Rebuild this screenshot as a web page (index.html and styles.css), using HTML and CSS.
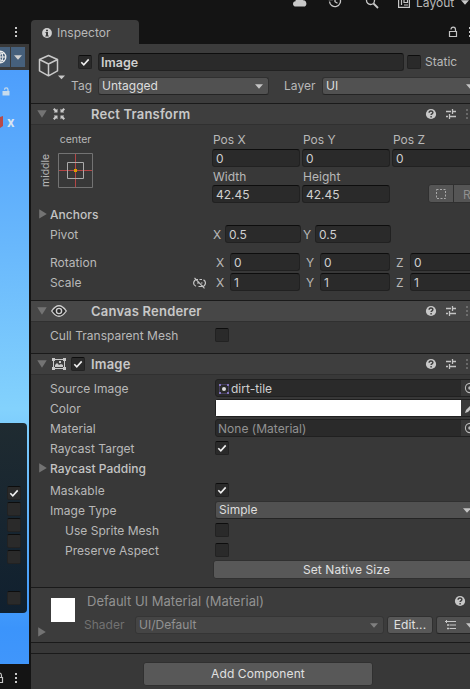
FILE: index.html
```
<!DOCTYPE html>
<html lang="en">
<head>
<meta charset="utf-8">
<title>Inspector</title>
<link rel="stylesheet" href="styles.css">
</head>
<body>
<svg class="defs" width="0" height="0">
  <symbol id="check" viewBox="0 0 14 14"><path d="M3.3 7.2l2.5 2.6 4.9-5.4" fill="none" stroke="#f0f0f0" stroke-width="1.6"/></symbol>
  <symbol id="help" viewBox="0 0 12 12"><circle cx="6" cy="6" r="5.1" fill="#c8c8c8"/><path d="M4.1 4.8c0-2.4 3.8-2.3 3.8-.2 0 1.2-1.8 1.2-1.8 2.4M6.1 8v1.4" fill="none" stroke="#3c3c3c" stroke-width="1.4"/></symbol>
  <symbol id="preset" viewBox="0 0 12 12"><path d="M1 3.5h5M8 3.5h3M7.5 1v5M1 8.5h2M5 8.5h6M4.5 6v5" fill="none" stroke="#c4c4c4" stroke-width="1.3"/></symbol>
  <symbol id="dots" viewBox="0 0 4 12"><path d="M1 1h2v2H1zM1 5h2v2H1zM1 9h2v2H1z" fill="#c8c8c8"/></symbol>
  <symbol id="lock" viewBox="0 0 10 12"><path d="M1.5 5.5h7v5h-7zM3 3.5c0-3.2 4.5-3.2 4.5 0v2" fill="none" stroke="#c4c4c4" stroke-width="1.2"/></symbol>
  <symbol id="down" viewBox="0 0 8 5"><path d="M0 .3h8L4 4.8z" fill="currentColor"/></symbol>
  <symbol id="fold" viewBox="0 0 10 8"><path d="M.3.2h9.4L5 7.8z" fill="#737373"/></symbol>
  <symbol id="right" viewBox="0 0 8 10"><path d="M.2.2v9.4L7.8 5z" fill="#737373"/></symbol>
  <symbol id="picker" viewBox="0 0 12 12"><circle cx="6" cy="6" r="4.6" fill="none" stroke="#bbb" stroke-width="1.1"/><circle cx="6" cy="6" r="1.8" fill="#bbb"/></symbol>
</svg>
<div class="app">
  <header class="topbar">
    <svg class="cloud" width="16" height="12" viewBox="0 0 16 12"><path d="M4 11.6C.1 11.6.1 6.5 3.5 6.300 3.700 1 10.500 1 11 5.300c4.200-.3 4.600 6.300.8 6.300z" fill="#c8c8c8"/></svg>
    <svg class="history" width="14" height="14" viewBox="0 0 14 14"><path d="M1.500 7.500A5.500 5.500 0 1 0 3.300 3M1.200 2v3.500h3.600M7 4v3.700l2.500 1.500" fill="none" stroke="#c8c8c8" stroke-width="1.300"/></svg>
    <svg class="search" width="14" height="14" viewBox="0 0 14 14"><circle cx="5.500" cy="5.500" r="4" fill="none" stroke="#c8c8c8" stroke-width="1.300"/><path d="M8.500 8.500l4.500 4.500" stroke="#c8c8c8" stroke-width="1.800"/></svg>
    <svg class="layout-icon" width="12" height="12" viewBox="0 0 12 12"><path d="M.6.6h10.800v10.800H.6zM3.500 3v6M6 3v3.500h3.500V3M6 9h4" fill="none" stroke="#c8c8c8" stroke-width="1.200"/></svg>
    <span class="layout-text">Layout</span>
    <svg class="layout-arrow" width="8" height="5"><use href="#down"/></svg>
  </header>
  <div class="main">
    <aside class="scene-panel">
      <div class="scene-tabs"><svg width="4" height="12"><use href="#dots"/></svg></div>
      <div class="scene-tools">
        <div class="globe"><svg width="13" height="14" viewBox="0 0 13 14"><circle cx="6" cy="7" r="5.800" fill="none" stroke="#eee" stroke-width="1.300"/><path d="M0 7h12M6 1v12M2 3q4 2.500 8 0M2 11q4-2.500 8 0M6 1q-6 6 0 12M6 1q6 6 0 12" fill="none" stroke="#eee"/></svg></div>
        <div class="tool-drop"><svg width="8" height="5"><use href="#down"/></svg></div>
      </div>
      <div class="scene">
        <div class="scene-lock"><svg width="8" height="9" viewBox="0 0 8 9"><path d="M.5 4h7v4.500h-7z" fill="#c7dbed"/><path d="M2.500 2.700C2.500.3 6 .3 6 2.700V4" fill="none" stroke="#c7dbed" stroke-width="1.200"/></svg></div>
        <div class="axis"><svg width="3" height="14" viewBox="0 0 3 14"><path d="M0 2l3-1v10l-3 2z" fill="#b84a48"/></svg><b>x</b></div>
        <div class="overlay">
          <span class="box"><svg width="14" height="14"><use href="#check"/></svg></span>
          <span class="box"></span><span class="box"></span><span class="box"></span><span class="box"></span>
          <span class="box last"></span>
        </div>
      </div>
      <div class="scene-foot"><svg width="10" height="12"><use href="#lock"/></svg><svg width="4" height="12"><use href="#dots"/></svg></div>
    </aside>

    <section class="inspector">
      <div class="tabs">
        <div class="tab"><svg width="10" height="10" viewBox="0 0 10 10"><circle cx="5" cy="5" r="4.900" fill="#d0d0d0"/><path d="M4 1.700h2v1.500H4zM3.500 4.100H6v3.300h.8v1H3.300v-1H4V5h-.5z" fill="#3c3c3c"/></svg><span>Inspector</span></div>
        <svg class="tab-lock" width="10" height="12"><use href="#lock"/></svg>
        <svg class="tab-dots" width="4" height="12"><use href="#dots"/></svg>
      </div>

      <div class="object">
        <svg class="cube" width="28" height="28" viewBox="0 0 28 28"><path d="M10.500 1.500l9 4v11.300l-9 5-9-5V5.500zM1.500 5.500l9 4.500 9-4.500M10.500 10v11.500" fill="none" stroke="#c8c8c8" stroke-width="1.500" stroke-linejoin="round"/><path d="M20 21.500h7l-3.500 3.700z" fill="#c8c8c8"/></svg>
        <div class="object-rows">
          <div class="object-row">
            <span class="box active"><svg width="14" height="14"><use href="#check"/></svg></span>
            <div class="field name">Image</div>
            <span class="box"></span><span class="static">Static</span>
          </div>
          <div class="object-row">
            <span class="tag">Tag</span>
            <div class="drop tag-drop">Untagged<svg width="8" height="5"><use href="#down"/></svg></div>
            <span class="layer">Layer</span>
            <div class="drop layer-drop">UI<svg width="8" height="5"><use href="#down"/></svg></div>
          </div>
        </div>
      </div>

      <div class="component-head">
        <svg class="fold" width="10" height="8"><use href="#fold"/></svg>
        <svg class="kind rect" width="12" height="12" viewBox="0 0 12 12"><path d="M0 1.500L1.500 0l1.700 1.700L4.500.8V4.500H.8L1.700 3.200zM12 1.500L10.500 0 8.800 1.700 7.500.8V4.500h3.700L10.300 3.200zM0 10.500L1.500 12l1.700-1.700 1.300.9V7.500H.8l.9 1.300zM12 10.500L10.500 12l-1.700-1.700-1.300.9V7.500h3.700l-.9 1.300z" fill="#c8c8c8"/></svg>
        <h2>Rect Transform</h2>
        <div class="tools"><svg width="12" height="12"><use href="#help"/></svg><svg width="12" height="12"><use href="#preset"/></svg><svg width="4" height="12" opacity=".3"><use href="#dots"/></svg></div>
      </div>
      <div class="rect-body">
        <div class="rect-top">
          <div class="anchor">
            <span class="anchor-x">center</span>
            <span class="anchor-y">middle</span>
            <svg class="anchor-box" width="35" height="35" viewBox="0 0 35 35"><path d="M.5.500h34v34H.5z" fill="none" stroke="#737373"/><path d="M17.500 1v33M1 17.500h33" stroke="#b44646"/><path d="M9.500 9.500h16v16h-16z" fill="none" stroke="#aaa"/><path d="M16 16h3v3h-3z" fill="#dc9c00"/></svg>
          </div>
          <div class="pos-grid">
            <span>Pos X</span><span>Pos Y</span><span>Pos Z</span>
            <div class="field">0</div><div class="field">0</div><div class="field">0</div>
            <span>Width</span><span>Height</span><span></span>
            <div class="field">42.45</div><div class="field">42.45</div>
            <div class="modes"><i><svg width="12" height="12" viewBox="0 0 12 12"><path d="M1.500 1.500h9v9h-9z" fill="none" stroke="#aaa" stroke-dasharray="2 1.500"/></svg></i><i>R</i></div>
          </div>
        </div>
        <div class="row"><svg class="disclosure" width="8" height="10"><use href="#right"/></svg><span class="label strong">Anchors</span></div>
        <div class="row pivot"><span class="label">Pivot</span><div class="xyz"><span>X</span><div class="field">0.5</div><span>Y</span><div class="field">0.5</div></div></div>
        <div class="row rotation"><span class="label">Rotation</span><div class="xyz wide"><span>X</span><div class="field">0</div><span>Y</span><div class="field">0</div><span>Z</span><div class="field">0</div></div></div>
        <div class="row"><span class="label scale">Scale <svg width="13" height="12" viewBox="0 0 13 12"><path d="M5 2.500H4a3.500 3.500 0 0 0-1 6.800M5.500 9.500H9a3.500 3.500 0 0 0 1.500-6.600M6.500 2.500H9M4 6h2M8 6h1.500M1.500.800l10 10.500" fill="none" stroke="#c4c4c4" stroke-width="1.200"/></svg></span><div class="xyz wide"><span>X</span><div class="field">1</div><span>Y</span><div class="field">1</div><span>Z</span><div class="field">1</div></div></div>
      </div>

      <div class="component-head hover">
        <svg class="fold" width="10" height="8"><use href="#fold"/></svg>
        <svg class="kind eye" width="16" height="14" viewBox="0 0 16 14"><path d="M.7 7Q8-3.500 15.300 7 8 17.500.7 7z" fill="#2b2b2b" stroke="#d0d0d0" stroke-width="1.300"/><circle cx="8" cy="7" r="2.600" fill="none" stroke="#d0d0d0" stroke-width="1.400"/></svg>
        <h2>Canvas Renderer</h2>
        <div class="tools"><svg width="12" height="12"><use href="#help"/></svg><svg width="12" height="12"><use href="#preset"/></svg><svg width="4" height="12" opacity=".3"><use href="#dots"/></svg></div>
      </div>
      <div class="canvas-body"><div class="row"><span class="label">Cull Transparent Mesh</span><span class="box"></span></div></div>

      <div class="component-head">
        <svg class="fold" width="10" height="8"><use href="#fold"/></svg>
        <svg class="kind picture" width="14" height="12" viewBox="0 0 14 12"><path d="M1.500 1.500h11v9h-11z" fill="none" stroke="#c8c8c8"/><path d="M0 0h3v3H0zM11 0h3v3h-3zM0 9h3v3H0zM11 9h3v3h-3zM3 9V7l2-2 2 2 2-1 2 1v2zM7 3h2v2H7z" fill="#c8c8c8"/></svg>
        <span class="box"><svg width="14" height="14"><use href="#check"/></svg></span>
        <h2>Image</h2>
        <div class="tools"><svg width="12" height="12"><use href="#help"/></svg><svg width="12" height="12"><use href="#preset"/></svg><svg width="4" height="12" opacity=".3"><use href="#dots"/></svg></div>
      </div>
      <div class="image-body">
        <div class="row"><span class="label">Source Image</span><div class="object-field"><span><svg width="12" height="12" viewBox="0 0 12 12"><path d="M1.500 1.500h9v9h-9z" fill="none" stroke="#46405f"/><path d="M1 1h2v2H1zM9 1h2v2H9zM1 9h2v2H1zM9 9h2v2H9z" fill="#8173bd"/><circle cx="6" cy="6" r="2" fill="#ddd"/></svg>dirt-tile</span><i><svg width="12" height="12"><use href="#picker"/></svg></i></div></div>
        <div class="row"><span class="label">Color</span><div class="object-field color"><span></span><i><svg width="12" height="12" viewBox="0 0 12 12"><path d="M1 11l1-3 4-4 2 2-4 4zM6 3l3-3 3 3-3 3z" fill="#c4c4c4"/></svg></i></div></div>
        <div class="row"><span class="label">Material</span><div class="object-field none"><span>None (Material)</span><i><svg width="12" height="12"><use href="#picker"/></svg></i></div></div>
        <div class="row"><span class="label">Raycast Target</span><span class="box"><svg width="14" height="14"><use href="#check"/></svg></span></div>
        <div class="row"><svg class="disclosure" width="8" height="10"><use href="#right"/></svg><span class="label strong">Raycast Padding</span></div>
        <div class="row maskable"><span class="label">Maskable</span><span class="box"><svg width="14" height="14"><use href="#check"/></svg></span></div>
        <div class="row"><span class="label">Image Type</span><div class="drop type-drop">Simple<svg width="8" height="5"><use href="#down"/></svg></div></div>
        <div class="row"><span class="label sub">Use Sprite Mesh</span><span class="box"></span></div>
        <div class="row"><span class="label sub">Preserve Aspect</span><span class="box"></span></div>
        <button class="native">Set Native Size</button>
      </div>

      <div class="material">
        <div class="preview"><div class="swatch"></div><svg width="8" height="10"><use href="#right"/></svg></div>
        <div class="material-info">
          <div class="material-title"><span>Default UI Material (Material)</span><svg width="12" height="12"><use href="#help"/></svg></div>
          <div class="shader"><span>Shader</span><div class="drop shader-drop">UI/Default<svg width="8" height="5"><use href="#down"/></svg></div><button class="edit">Edit...</button><div class="drop list-drop"><svg width="12" height="10" viewBox="0 0 12 10"><path d="M3 1.500h8M4.500 5h6.500M4.500 8.500h6.500M2.500 4.500h1v1h-1zM2.500 8h1v1h-1zM0 1.500h3M1.500 0v3" fill="none" stroke="#c8c8c8"/></svg><svg width="8" height="5"><use href="#down"/></svg></div></div>
        </div>
      </div>
      <div class="divider"></div>
      <div class="add"><button>Add Component</button></div>
    </section>
  </div>
</div>
</body>
</html>
```
FILE: styles.css
```
* { box-sizing: border-box; }
body { margin: 0; overflow: hidden; background: #141414; }
svg { display: block; flex: none; }
i { font-style: normal; }
button { font: inherit; letter-spacing: .1px; color: #e0e0e0; background: #585858; border: 1px solid #303030; border-radius: 3px; padding: 0; }
.defs { position: absolute; }
.app { width: 470px; height: 689px; overflow: hidden; display: flex; flex-direction: column; font: 12px/18px Inter, "Liberation Sans", sans-serif; letter-spacing: .02px; color: #b8b8b8; white-space: nowrap; }

.topbar { height: 20px; flex: none; display: flex; background: #141414; }
.topbar svg { color: #c8c8c8; }
.cloud { margin: -5px 0 0 292px; }
.history { margin: -6px 0 0 20px; }
.search { margin: -5px 0 0 23px; }
.layout-icon { margin: -4px 0 0 19px; }
.layout-text { margin: -6px 0 0 6px; width: 39px; }
.layout-arrow { margin: 0 0 0 6px; }

.main { flex: 1; display: flex; min-height: 0; }
.scene-panel { width: 29px; margin-right: 2px; flex: none; display: flex; flex-direction: column; overflow: hidden; }
.scene-tabs { height: 24px; padding: 6px 0 0 14px; }
.scene-tools { height: 26px; display: flex; gap: 1px; padding: 3px 4px 3px 0; background: #383838; }
.globe { width: 10px; background: #46607c; padding-top: 3px; overflow: hidden; }
.globe svg { margin-left: -6px; }
.tool-drop { flex: 1; background: #46607c; color: #d0d0d0; display: flex; align-items: center; justify-content: center; }
.scene { height: 594px; background: linear-gradient(#4d9efc, #69b8fc 30%, #83d2fd 57%, #3b94fb 94%, #4096fb); display: flex; flex-direction: column; }
.scene-lock { height: 43px; padding: 17px 0 0 2px; }
.axis { height: 310px; display: flex; color: #d9e5f0; font-size: 13px; line-height: 18px; }
.axis svg { margin-top: 2px; }
.axis b { margin-left: 4px; }
.overlay { width: 27px; height: 190px; padding: 63px 0 0 7px; background: linear-gradient(#1f2b31, #10202f); border-radius: 0 4px 4px 0; }
.overlay .box { margin-bottom: 2px; }
.overlay .last { margin-top: 27px; }
.scene-foot { height: 25px; display: flex; gap: 9px; padding-top: 8px; background: #141414; }
.scene-foot svg:first-child { margin-left: -6px; margin-right: 1px; }

.inspector { width: 439px; flex: none; background: #383838; overflow: hidden; }
.tabs { height: 24px; display: flex; background: #141414; }
.tab { width: 108px; height: 24px; flex: none; display: flex; align-items: center; gap: 5px; padding: 1px 0 0 11px; background: #3c3c3c; border-radius: 4px 4px 0 0; }
.tab-lock { margin: 6px 0 0 309px; }
.tab-dots { margin: 6px 0 0 10px; }
.object { height: 59px; padding: 9px 0 0 7px; display: flex; background: #3c3c3c; }
.cube { margin-top: 1px; }
.object-rows { width: 450px; flex: none; display: flex; flex-direction: column; gap: 6px; }
.object-row { height: 18px; display: flex; align-items: center; }
.active { margin: 0 6px 0 12px; }
.name { width: 306px; margin-right: 3px; }
.static { margin-left: 4px; }
.tag { width: 27px; margin-left: 5px; }
.layer { width: 38px; margin-left: 15px; }

.box { display: block; width: 14px; height: 14px; flex: none; background: #2a2a2a; border: 1px solid #222; border-top-color: #0d0d0d; border-radius: 2px; }
.box svg { margin: -1px; }
.field { height: 18px; padding-left: 3px; line-height: 17px; background: #2a2a2a; border: 1px solid #212121; border-top-color: #0d0d0d; border-radius: 3px; color: #d0d0d0; }
.name.field { padding-left: 2px; font-weight: 600; font-size: 12.500px; }
.drop { height: 18px; line-height: 16px; display: flex; align-items: center; justify-content: space-between; padding: 0 5px 0 3px; background: #515151; border: 1px solid #303030; border-bottom-color: #242424; border-radius: 3px; color: #dedede; flex: none; }
.drop svg { color: #c4c4c4; }
.tag-drop { width: 171px; }
.layer-drop { width: 158px; }

.component-head { height: 22px; display: flex; align-items: center; background: #3e3e3e; border-top: 1px solid #1a1a1a; border-bottom: 1px solid #303030; }
.component-head.hover { background: #474747; }
.fold { margin-left: 6px; }
.kind { margin-left: 6px; }
.rect { margin-right: 25px; }
.eye { margin: 0 23px 0 4px; }
.picture { margin-right: 5px; margin-left: 5px; }
.component-head .box { margin-right: 6px; }
h2 { margin: 0; width: 335px; flex: none; font-size: 13px; line-height: 18px; font-weight: 600; letter-spacing: .2px; color: #c8c8c8; }
.rect + h2, .eye + h2 { padding-left: 1px; }
.picture ~ h2 { width: 334px; }
.tools { display: flex; gap: 8px; }

.rect-body { height: 175px; padding-top: 5px; }
.rect-top { height: 74px; display: flex; }
.anchor { width: 181px; flex: none; display: grid; grid-template-columns: 15px 35px; grid-template-rows: 23px 35px; column-gap: 4px; padding-left: 8px; align-content: start; font-size: 10.5px; line-height: 20px; letter-spacing: -.05px; }
.anchor-x { grid-column: 2; text-align: center; }
.anchor-y { writing-mode: vertical-rl; transform: rotate(180deg); text-align: center; line-height: 14px; }
.pos-grid { flex: none; display: grid; grid-template-columns: 88px 88px 88px; grid-template-rows: 19px 18px 18px 18px; column-gap: 2px; }
.pos-grid span { padding-left: 1px; line-height: 20px; }
.pos-grid .field { align-self: start; }
.modes { width: 70px; height: 19px; margin: -1px 0 0 36px; display: flex; background: #555; border: 1px solid #303030; border-radius: 3px; color: #8f8f8f; }
.modes i { width: 24px; padding: 3px 0 0 6px; }
.modes i + i { width: 40px; border-left: 1px solid #303030; padding: 1px 0 0 9px; font-size: 12px; line-height: 17px; }

.row { height: 20px; display: flex; align-items: center; }
.label { width: 165px; margin-left: 19px; padding-top: 1px; flex: none; }
.label.sub { width: 150px; margin-left: 34px; }
.label.strong { color: #c4c4c4; margin-left: 3px; font-weight: 500; }
.disclosure { margin-left: 8px; }
.label.scale { display: flex; align-items: center; justify-content: space-between; padding-right: 9px; }
.rotation { margin-top: 8px; }
.xyz { display: grid; grid-template-columns: 14px 76px 14px 76px; margin-left: -3px; flex: none; }
.xyz span { padding-left: 1px; line-height: 19px; }
.xyz .field { width: 76px; }
.xyz:not(.wide) .field { margin-left: -1px; }
.xyz.wide { grid-template-columns: 15px 75px 15px 75px 15px 70px; margin-left: 0; }
.xyz.wide .field { width: 70px; }
.canvas-body { height: 31px; padding-top: 3px; }

.image-body { height: 212px; padding-top: 3px; }
.object-field { width: 262px; height: 18px; display: flex; background: #2a2a2a; border: 1px solid #202020; border-radius: 3px; flex: none; color: #d0d0d0; }
.object-field span { width: 245px; padding-left: 2px; display: flex; align-items: center; gap: 1px; line-height: 17px; padding-top: 1px; }
.object-field i { width: 15px; background: #383838; padding: 2px 0 0 3px; }
.object-field.color span { background: #fff; }
.object-field.none { color: #929292; }
.maskable { margin-top: 2px; }
.type-drop { width: 262px; }
.native { display: block; width: 267px; height: 19px; margin: 0 0 0 182px; line-height: 17px; }

.material { height: 56px; display: flex; background: #3c3c3c; border-top: 1px solid #1a1a1a; border-bottom: 1px solid #1a1a1a; }
.preview { width: 53px; flex: none; padding: 10px 0 0 7px; }
.swatch { width: 24px; height: 24px; margin: 0 0 5px 13px; background: #fff; }
.material-info { flex: none; }
.material-title { height: 26px; width: 386px; display: flex; align-items: center; padding-left: 3px; color: #929292; font-size: 13px; }
.material-title span { width: 367px; letter-spacing: .01px; }
.shader { display: flex; margin-top: 2px; }
.shader > span { width: 51px; color: #727272; }
.shader-drop { width: 249px; color: #929292; background: #454545; border-color: #353535; }
.shader-drop svg { color: #808080; }
.edit { width: 46px; height: 18px; margin: 0 3px; line-height: 16px; }
.list-drop { width: 45px; padding: 0 6px 0 8px; }
.divider { height: 11px; border-bottom: 1px solid #1a1a1a; }
.add { padding: 8px 0 0 112px; }
.add button { width: 230px; height: 24px; font-size: 12px; }
```
